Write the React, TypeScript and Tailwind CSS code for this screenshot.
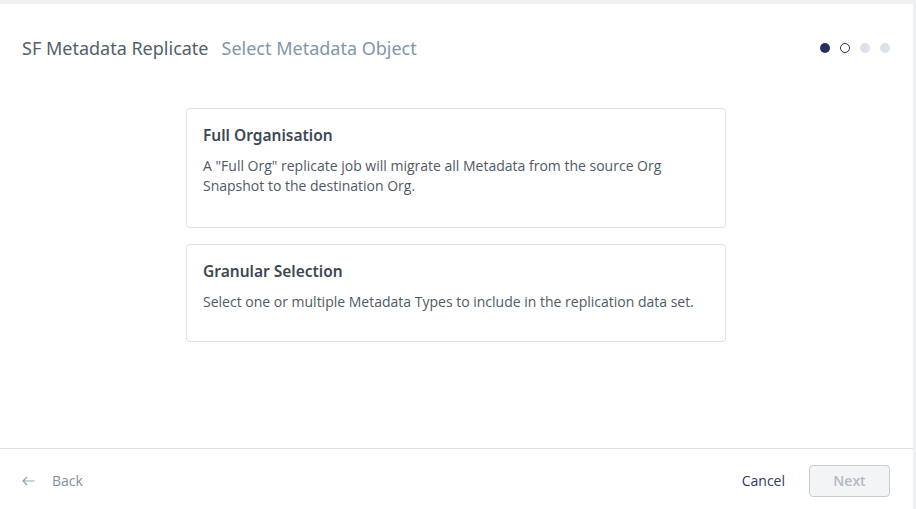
import React from "react";

export default function App() {
  return (
    <div className="w-[916px] h-[509px] bg-[#eef0f1] pt-[4px] pr-[3px] flex flex-col overflow-hidden">
      <div className="flex-1 bg-white flex flex-col">
        <div className="h-[88px] flex items-center justify-between pl-[22px] pr-[23px]">
          <div className="flex items-center gap-[13px] text-[18px] font-['Noto_Sans',sans-serif]">
            <span className="text-[#52606b]">SF Metadata Replicate</span>
            <span className="text-[#7f97a8]">Select Metadata Object</span>
          </div>
          <div className="flex items-center gap-[10px]">
            <span className="w-[10px] h-[10px] rounded-full bg-[#25305f]" />
            <span className="w-[10px] h-[10px] rounded-full border-[1.5px] border-[#25305f]" />
            <span className="w-[10px] h-[10px] rounded-full bg-[#dde1ea]" />
            <span className="w-[10px] h-[10px] rounded-full bg-[#dde1ea]" />
          </div>
        </div>
        <div className="flex-1 flex flex-col items-center pt-[16px] gap-[16px] pr-[1px]">
          <div className="w-[540px] h-[120px] border border-[#dde2e8] rounded-[4px] px-[16px] pt-[15px]">
            <div className="text-[15.5px] font-semibold text-[#3d4852] font-['Noto_Sans',sans-serif] leading-[22px]">Full Organisation</div>
            <p className="mt-[10px] text-[14px] leading-[20px] text-[#4f5a64] font-['Open_Sans',sans-serif]">
              A "Full Org" replicate job will migrate all Metadata from the source Org Snapshot to the destination Org.
            </p>
          </div>
          <div className="w-[540px] h-[98px] border border-[#dde2e8] rounded-[4px] px-[16px] pt-[15px]">
            <div className="text-[15.5px] font-semibold text-[#3d4852] font-['Noto_Sans',sans-serif] leading-[22px]">Granular Selection</div>
            <p className="mt-[10px] text-[14px] leading-[20px] text-[#4f5a64] font-['Open_Sans',sans-serif]">
              Select one or multiple Metadata Types to include in the replication data set.
            </p>
          </div>
        </div>
        <div className="h-[61px] border-t border-[#dde2e8] flex items-center justify-between pl-[22px] pr-[23px] pt-[3px] font-['Open_Sans',sans-serif] text-[14px]">
          <button className="flex items-center gap-[17px] text-[#7d93a3]">
            <svg width="13" height="10" viewBox="0 0 13 10" fill="none" stroke="#8fa3b1" strokeWidth="1.2">
              <path d="M12.5 5H1M5 1L1 5l4 4" />
            </svg>
            <span>Back</span>
          </button>
          <div className="flex items-center gap-[24px]">
            <button className="text-[#2f3a66]">Cancel</button>
            <button className="w-[81px] h-[32px] rounded-[4px] border border-[#c8cdd4] bg-[#f3f4f6] text-[#b3bac2] font-semibold">Next</button>
          </div>
        </div>
      </div>
    </div>
  );
}
